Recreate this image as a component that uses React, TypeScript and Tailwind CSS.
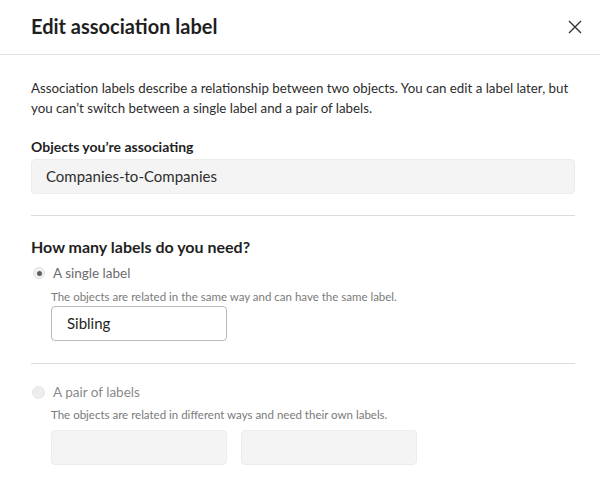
export default function App() {
  return (
    <div className="w-[600px] h-[478px] overflow-hidden bg-white text-[#2d2d2d]" style={{ fontFamily: 'Lato, "Noto Sans", sans-serif' }}>
      {/* Header */}
      <div className="h-[55px] border-b border-[#e3e3e3] flex items-center justify-between pl-[31px] pr-[13px]">
        <h1 className="text-[20px] font-bold text-[#1f1f1f] leading-none pb-[2px]">Edit association label</h1>
        <button className="w-[24px] h-[24px] flex items-center justify-center text-[#333]" aria-label="Close">
          <svg width="14" height="14" viewBox="0 0 14 14" fill="none" stroke="currentColor" strokeWidth="1.4">
            <path d="M1 1 L13 13 M13 1 L1 13" />
          </svg>
        </button>
      </div>

      <div className="px-[31px] pr-[25px]">
        <p className="mt-[23px] text-[13.3px] leading-[20px] text-[#2d2d2d]">
          Association labels describe a relationship between two objects. You can edit a label later, but you can’t switch between a single label and a pair of labels.
        </p>

        <div className="mt-[19px] text-[14px] font-bold leading-[20px] text-[#1f1f1f]">Objects you’re associating</div>
        <div className="mt-[2px] h-[35px] rounded-[4px] bg-[#f4f4f4] border border-[#ececec] flex items-center px-[14px] text-[15px] text-[#2d2d2d]">
          Companies-to-Companies
        </div>

        <div className="mt-[21px] border-t border-[#dcdcdc]" />

        <div className="mt-[20px] text-[16px] font-bold leading-[22px] text-[#1f1f1f]">How many labels do you need?</div>

        <div className="mt-[5px] flex items-center gap-[8px] pl-[2px]">
          <span className="w-[12px] h-[12px] rounded-full bg-[#f0f0f0] border border-[#e2e2e2] flex items-center justify-center">
            <span className="w-[5px] h-[5px] rounded-full bg-[#5e5e5e]" />
          </span>
          <span className="text-[13.5px] text-[#6b6b6b] leading-[20px]">A single label</span>
        </div>
        <div className="pl-[20px]">
          <div className="mt-[6px] text-[11.5px] text-[#7a7a7a] leading-[16px]">The objects are related in the same way and can have the same label.</div>
          <div className="mt-[1px] w-[176px] h-[35px] rounded-[4px] border border-[#b9b9b9] flex items-center px-[15px] text-[15px] text-[#1f1f1f]">
            Sibling
          </div>
        </div>

        <div className="mt-[22px] border-t border-[#dcdcdc]" />

        <div className="mt-[18px] flex items-center gap-[8px] pl-[1px]">
          <span className="w-[13px] h-[13px] rounded-full bg-[#ededed] border border-[#e6e6e6]" />
          <span className="text-[13.5px] text-[#8a8a8a] leading-[20px]">A pair of labels</span>
        </div>
        <div className="pl-[20px]">
          <div className="mt-[5px] text-[11.5px] text-[#7a7a7a] leading-[16px]">The objects are related in different ways and need their own labels.</div>
          <div className="mt-[7px] flex gap-[14px]">
            <div className="w-[176px] h-[35px] rounded-[4px] bg-[#f4f4f4] border border-[#ececec]" />
            <div className="w-[176px] h-[35px] rounded-[4px] bg-[#f4f4f4] border border-[#ececec]" />
          </div>
        </div>
      </div>
    </div>
  );
}
